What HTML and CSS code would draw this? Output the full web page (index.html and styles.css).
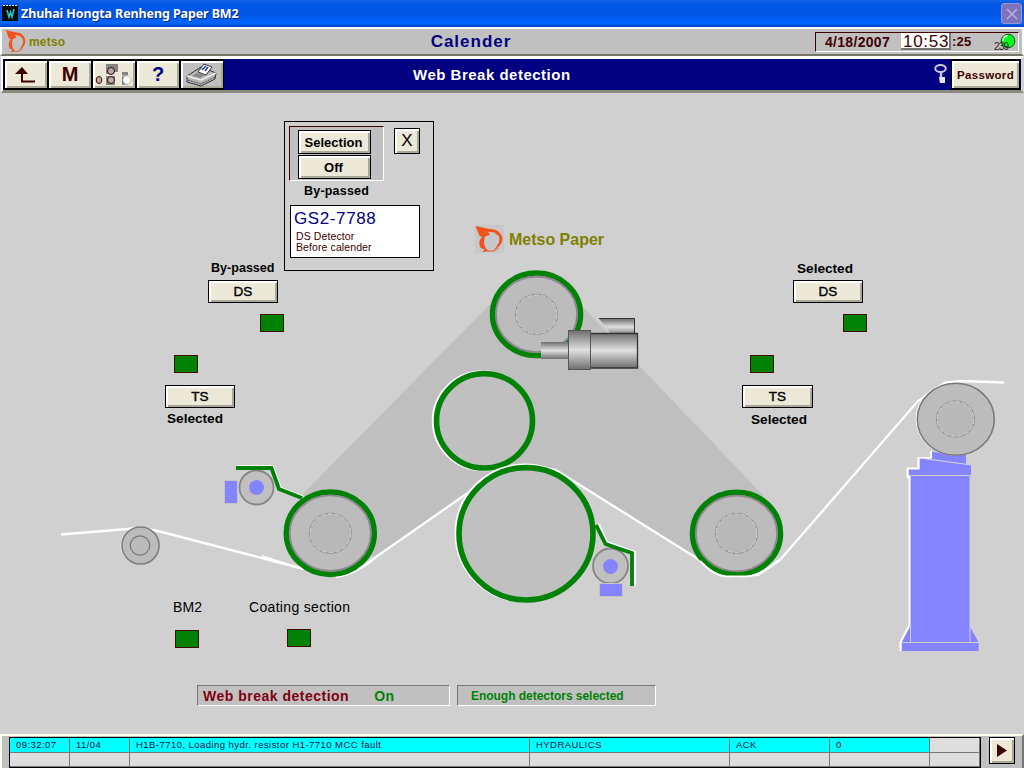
FILE: index.html
```html
<!DOCTYPE html>
<html lang="en">
<head>
<meta charset="utf-8">
<title>Zhuhai Hongta Renheng Paper BM2</title>
<link rel="stylesheet" href="styles.css">
</head>
<body>
<div class="window">
  <header class="titlebar">
    <svg class="app-icon" width="16" height="16" viewBox="0 0 16 16"><rect width="16" height="16" fill="#050c0c"/><path d="M1 .5h14" stroke="#dce6ff" stroke-dasharray="2 1"/><path d="M5 5l2 7 1.500-5 1.500 5 2-8" fill="none" stroke="#24c8c8" stroke-width="1.500"/></svg>
    <h1>Zhuhai Hongta Renheng Paper BM2</h1>
    <button class="win-close" aria-label="Close"><svg width="14" height="14" viewBox="0 0 14 14"><path d="M2 2l10 10M12 2L2 12" stroke="#b9b0d4" stroke-width="1.6"/></svg></button>
  </header>

  <section class="infobar">
    <div class="brand">
      <svg width="20" height="23" viewBox="0 0 28 27" preserveAspectRatio="none"><use href="#metso"/></svg>
      <span>metso</span>
    </div>
    <h2>Calender</h2>
    <div class="clock">
      <span class="date">4/18/2007</span>
      <span class="time">10:53</span>
      <span class="sec">:25</span>
      <svg class="lamp" width="26" height="17" viewBox="0 0 26 17"><circle cx="18" cy="8" r="6.8" fill="#00ff1e" stroke="#064d0a"/><path d="M13 8q0-5 5-5.500" stroke="#e6ffe6" fill="none" stroke-width="1.500"/><text x="4" y="16.500" class="lamp-no" textLength="15">239</text></svg>
    </div>
  </section>

  <nav class="toolbar">
    <button class="tool"><svg width="24" height="18" viewBox="0 0 24 18"><path d="M8 4v11.500h13" fill="none" stroke="#400000" stroke-width="2"/><path d="M1 8L8 1l6 7z" fill="#400000"/></svg></button>
    <button class="tool letter">M</button>
    <button class="tool"><svg width="38" height="24" viewBox="0 0 38 24"><g stroke="#301010"><path d="M11 1h12v8h-4v2h-8z" fill="#858585" stroke="none"/><path d="M11 13h9v9h-9zM27 9h6v13h-6z" fill="#858585" stroke="none"/><ellipse cx="4" cy="17" rx="2.800" ry="3.500" fill="#c9a89b"/><circle cx="16" cy="8" r="3.500" fill="#b9a9a9"/><circle cx="16" cy="17" r="3.500" fill="#c4aaa6"/></g><circle cx="32" cy="17" r="4.200" fill="#fff" stroke="#777" stroke-width=".5"/><path d="M27 13h7M28 22h6" stroke="#ddd"/></svg></button>
    <button class="tool letter help">?</button>
    <button class="tool print"><svg width="34" height="24" viewBox="0 0 34 24"><path d="M2 13L16 4l15 6-1 6-14 7-14-4z" fill="#b7b7b7" stroke="#333"/><path d="M2 13l14 4 15-7" fill="none" stroke="#eee" stroke-width="1.500"/><path d="M3 17l13 4 14-7" fill="none" stroke="#444" stroke-dasharray="2 1"/><path d="M13 9l6-8 8 3-6 8z" fill="#fff" stroke="#334"/><path d="M17 7l4-4M20 8l3-4" stroke="#223a8c" stroke-width="1.500"/><path d="M7 13l8 2 5-3-8-2z" fill="#888"/></svg></button>
    <h3>Web Break detection</h3>
    <svg class="key" width="13" height="21" viewBox="0 0 13 21"><ellipse cx="6.500" cy="4.500" rx="5.300" ry="3.500" fill="none" stroke="#c9c9dd" stroke-width="2"/><path d="M7 8v11" stroke="#c9c9dd" stroke-width="2.400"/><path d="M5 13h6v6H6z" fill="#e4e4e4"/></svg>
    <button class="tool password">Password</button>
  </nav>

  <main class="process">
    <svg class="diagram" width="1024" height="642" viewBox="0 93 1024 642">
      <defs>
        <g id="metso"><path d="M0 0l14 3q8 0 11 5l-1 1q-6-4-13-3 4 1 3 3l-6 2-4-1z" fill="#f4511c"/><path d="M9 9q-6 4-5 9 0 5 5 5l-2 3 6-1-3-3q-3-6 0-13z" fill="#f4511c"/><path d="M20 6q8 2 7 8-1 6-9 10 6-6 6-11 0-4-5-6z" fill="#f4511c"/><path d="M12 25q7 1 11-3" fill="none" stroke="#f4511c"/></g>
        <linearGradient id="steel" x1="0" y1="0" x2="0" y2="1"><stop offset="0" stop-color="#6e6e6e"/><stop offset=".5" stop-color="#e0e0e0"/><stop offset="1" stop-color="#6e6e6e"/></linearGradient>
        <g id="roll"><ellipse rx="44" ry="41.200" fill="#bcbcbc" stroke="#008207" stroke-width="5.500"/><ellipse rx="40.600" ry="37.800" fill="none" stroke="#8d878d" stroke-width="1.800"/><ellipse rx="21" ry="20" fill="#b8b8b8" stroke="#858585"/><ellipse rx="20.500" ry="19.500" fill="none" stroke="#e4e4e4" stroke-width=".7" stroke-dasharray="5 2"/></g>
      </defs>
      <path d="M300 497L495 299l40-20 42 22 186 194-26 80-36-14-145-91-38-6-52 30-90 65z" fill="#bfbfbf"/>
      <g fill="none" stroke="#fff" stroke-width="2.300">
        <path d="M61 534.500l78-6.500 19 3"/>
        <path d="M158 531l146 38" stroke-width="2.500"/>
        <path d="M262 556l48 15" stroke-width="1.500"/>
        <path d="M336 577q20-3 40-20l106-74 24-15 20-3 30 5 158 99 14 6h30l22-15 138-159 27-18.500 16-1.500 43 1.500"/>
      </g>

      <circle cx="139.500" cy="545.500" r="19" fill="#fff"/>
      <circle cx="140.500" cy="545.500" r="18.600" fill="#bcbcbc" stroke="#7b7b7b" stroke-width="1.500"/>
      <circle cx="140" cy="545.500" r="9.700" fill="#bbb" stroke="#777" stroke-width="1.200"/>

      <g>
        <path d="M237 466h36l8 22 23 9" fill="none" stroke="#fff" stroke-width="2"/>
        <circle cx="256.500" cy="487.500" r="17" fill="#c0c0c0" stroke="#858585" stroke-width="1.800"/>
        <circle cx="256.500" cy="487.500" r="7.500" fill="#8484ff"/>
        <rect x="224.500" y="480.500" width="13" height="23" fill="#8484ff" stroke="#c5c5c5"/>
        <path d="M236 468h35.500l7.500 21 23 9" fill="none" stroke="#008207" stroke-width="3.800"/>
      </g>
      <use href="#roll" x="330.300" y="533.200"/>

      <ellipse cx="482.800" cy="420.800" rx="48.500" ry="48" fill="none" stroke="#fff" stroke-width="5"/>
      <ellipse cx="484.500" cy="420.800" rx="48" ry="47.200" fill="#c0c0c0" stroke="#008207" stroke-width="5.600"/>
      <ellipse cx="524.500" cy="533" rx="67.500" ry="67" fill="none" stroke="#fff" stroke-width="5"/>
      <ellipse cx="526" cy="533.800" rx="67" ry="66.200" fill="#c0c0c0" stroke="#008207" stroke-width="5.600"/>

      <circle cx="610.500" cy="566" r="17.500" fill="#c0c0c0" stroke="#858585" stroke-width="1.800"/>
      <circle cx="610.500" cy="566.500" r="7.500" fill="#8484ff"/>
      <rect x="599.500" y="583.500" width="23" height="13" fill="#8484ff" stroke="#c5c5c5"/>
      <path d="M599 524l8 18 28 10v34" fill="none" stroke="#fff" stroke-width="2"/>
      <path d="M596 525l9.500 19 26.500 9v33" fill="none" stroke="#008207" stroke-width="3.800"/>

      <use href="#roll" x="736.500" y="533.400"/>
      <path d="M700 561q14 15 26 15.500h20q16-1 32-16" fill="none" stroke="#fff" stroke-width="2"/>

      <use href="#roll" x="536.500" y="314.300"/>
      <g>
        <path d="M599 318.500h35v17h-22z" fill="url(#steel)"/><path d="M599 318.500h35.500v15" fill="none" stroke="#333"/>
        <rect x="541" y="342" width="28" height="17" fill="url(#steel)"/>
        <rect x="590" y="333" width="48" height="35" fill="url(#steel)"/><path d="M590 333.500h47.500v34.500h-47" fill="none" stroke="#333" stroke-width="1.300"/>
        <rect x="568.500" y="330.500" width="22" height="39" fill="url(#steel)" stroke="#555"/>
      </g>

      <g fill="#8484ff">
        <path d="M932 452l34 3v9l-35-5z"/>
        <path d="M909 476v-7h10.500v-11l51.500 7v10z"/>
        <rect x="910" y="475" width="60" height="168"/>
        <path d="M910 626l-8 16v9h76.500v-9l-9-16v16h-59.500z"/>
        <path d="M931 451v7M909.500 626V477h-2v-8.500h11V458h13M909 626l-8.500 16v9" fill="none" stroke="#fff" stroke-width="2"/>
        <path d="M919 458l52 7M909 475.500h61v167h9M902 642.500h68M910.500 476v166" fill="none" stroke="#cdcdda"/>
      </g>
      <ellipse cx="954.300" cy="419" rx="38.700" ry="36.500" fill="#fff"/>
      <ellipse cx="955.800" cy="419.300" rx="38.500" ry="36" fill="#bcbcbc" stroke="#777" stroke-width="1.500"/>
      <ellipse cx="955.500" cy="419" rx="19" ry="18" fill="#b9b9b9" stroke="#858585"/><ellipse cx="955.500" cy="419" rx="18.500" ry="17.500" fill="none" stroke="#e4e4e4" stroke-width=".7" stroke-dasharray="5 2"/>

      <g fill="#008207" stroke="#400c00">
        <rect x="260.500" y="314.500" width="23" height="17"/><rect x="174.500" y="355.500" width="23" height="17"/>
        <rect x="843.500" y="314.500" width="23" height="17"/><rect x="750.500" y="355.500" width="23" height="17"/>
        <rect x="175.500" y="630.500" width="23" height="17"/><rect x="287.500" y="629.500" width="23" height="17"/>
      </g>
      <rect x="475" y="225" width="29" height="28" fill="#c6c8ca"/>
      <use href="#metso" x="475.500" y="226"/>
      <g class="labels">
        <text x="509" y="245" class="metso-name" textLength="95" lengthAdjust="spacingAndGlyphs">Metso Paper</text>
        <text x="211" y="272" textLength="63.500" lengthAdjust="spacingAndGlyphs">By-passed</text>
        <text x="167" y="423" textLength="56" lengthAdjust="spacingAndGlyphs">Selected</text>
        <text x="797" y="273" textLength="56" lengthAdjust="spacingAndGlyphs">Selected</text>
        <text x="751" y="424" textLength="56" lengthAdjust="spacingAndGlyphs">Selected</text>
        <text x="173" y="612" class="plain" textLength="29">BM2</text>
        <text x="249" y="612" class="plain" textLength="101">Coating section</text>
      </g>
    </svg>
    <button class="btn ds-left">DS</button>
    <button class="btn ts-left">TS</button>
    <button class="btn ds-right">DS</button>
    <button class="btn ts-right">TS</button>

    <section class="popup">
      <div class="popup-top">
        <div class="choice"><button class="btn">Selection</button><button class="btn">Off</button></div>
        <button class="btn popup-close">X</button>
      </div>
      <div class="state">By-passed</div>
      <div class="tag"><div class="tag-id">GS2-7788</div><div class="tag-desc">DS Detector<br>Before calender</div></div>
    </section>

    <div class="status">
      <div class="status-box detection"><span>Web break detection</span><b>On</b></div>
      <div class="status-box enough">Enough detectors selected</div>
    </div>
  </main>

  <footer class="alarms">
    <div class="alarm-grid">
      <div class="cell on">09:32:07</div><div class="cell on">11/04</div><div class="cell on msg">H1B-7710, Loading hydr. resistor H1-7710 MCC fault</div><div class="cell on">HYDRAULICS</div><div class="cell on">ACK</div><div class="cell on">0</div><div class="cell"></div>
      <div class="cell"></div><div class="cell"></div><div class="cell"></div><div class="cell"></div><div class="cell"></div><div class="cell"></div><div class="cell"></div>
    </div>
    <button class="btn next" aria-label="Next"><svg width="10" height="13" viewBox="0 0 10 13"><path d="M0 0l10 6.500L0 13z" fill="#400000"/></svg></button>
  </footer>
</div>
</body>
</html>
```

FILE: styles.css
```css
* { box-sizing: border-box; }
body { margin: 0; background: #d0d0d0; font-family: "Liberation Sans", Arial, sans-serif; overflow: hidden; }
h1, h2, h3 { margin: 0; }
button { font: inherit; padding: 0; margin: 0; border-radius: 0; white-space: nowrap; }
.window { width: 1024px; height: 768px; display: flex; flex-direction: column; overflow: hidden; }

.titlebar { height: 27px; flex: none; display: flex; align-items: center; padding: 0 2px; background: linear-gradient(#1667e8 0, #0058e6 15%, #0055e5 50%, #0066ff 85%, #0040c0 100%); }
.app-icon { margin-top: -1px; }
.titlebar h1 { margin-left: 3px; flex: 1; color: #fff; font: bold 12.5px "Noto Sans", sans-serif; letter-spacing: -.11px; text-shadow: 1px 1px 0 #0a2a80; }
.win-close { width: 21px; height: 21px; background: #7c72bd; border: 1px solid #9a94d5; border-radius: 3px; display: grid; place-items: center; }

.infobar { height: 29px; flex: none; display: grid; grid-template-columns: 300px 1fr 300px; align-items: center; background: #c0c0c0; border: 2px solid #fff; border-bottom-color: #77756a; }
.brand { display: flex; align-items: center; gap: 3px; padding-left: 4px; color: #808000; font-size: 12px; font-weight: bold; letter-spacing: .2px; }
.infobar h2 { color: #000080; font-size: 17px; letter-spacing: 1px; text-align: center; padding-right: 82px; }
.clock { width: 204px; height: 20px; justify-self: end; margin-right: 3px; display: flex; align-items: center; border: 1px solid #400000; border-color: #400000 #fff #fff #400000; color: #400000; font-weight: bold; }
.date { width: 85px; padding-left: 9px; font-size: 14px; letter-spacing: .3px; }
.time { width: 50px; height: 17px; line-height: 17px; padding-left: 2px; background: #fff; border-right: 2px solid #777; border-bottom: 2px solid #777; font-size: 17px; font-weight: normal; letter-spacing: .7px; }
.sec { width: 39px; padding-left: 1px; font-size: 13px; letter-spacing: .2px; }
.lamp-no { font: 10px "Liberation Sans", sans-serif; fill: #302020; }

.toolbar { height: 37px; flex: none; display: flex; align-items: center; padding: 0 1px; margin-left: 1px; background: #000080; border: 3px solid #fff; border-left-width: 2px; border-bottom-color: #8b897e; border-right-color: #d6d3c4; }
.tool { width: 44px; height: 31px; display: grid; place-items: center; background: #ece9d8; border: solid #000; border-width: 2px 1px; color: #400000; box-shadow: inset 2px 2px #fff, inset -2px -2px #aaa899; }
.tool.letter { font-size: 20px; font-weight: bold; }
.tool.help { color: #000080; }
.tool.print { background: #c0c0c0; }
.toolbar h3 { flex: 1; color: #fff; font-size: 15px; letter-spacing: .5px; padding-left: 189px; }
.key { margin-right: 4px; }
.tool.password { width: 69px; font-size: 11.500px; font-weight: bold; letter-spacing: .35px; }

.process { position: relative; height: 642px; flex: none; background: #d0d0d0; }
.diagram { display: block; }
.labels text { font: bold 13px "Liberation Sans", sans-serif; fill: #000; }
.labels .plain { font: 14px "Liberation Sans", sans-serif; }
.labels .metso-name { font-size: 16.500px; fill: #808000; }

.btn { display: grid; place-items: center; background: #ece9d8; border: 1px solid #000; color: #000; font-size: 13px; font-weight: bold; box-shadow: inset 2px 2px #fff, inset -2px -2px #aaa899; }
.process > .btn { position: absolute; width: 70px; height: 23px; font-size: 13.5px; font-weight: normal; -webkit-text-stroke: .4px #000; }
.process > .ds-left { left: 208px; top: 187px; }
.process > .ts-left { left: 165px; top: 292px; }
.process > .ds-right { left: 793px; top: 187px; }
.process > .ts-right { left: 742px; top: 292px; width: 71px; }

.popup { position: absolute; left: 284px; top: 28px; width: 150px; height: 150px; border: 1px solid #000; background: #d0d0d0; padding: 4px; }
.popup-top { display: flex; gap: 10px; }
.choice { width: 95px; height: 55px; padding: 3px 0 0 8px; display: flex; flex-direction: column; gap: 1px; background: #c0c0c0; border: 1px solid; border-color: #400000 #fff #fff #400000; }
.choice .btn { width: 73px; height: 24px; padding-right: 2px; }
.popup-close { width: 26px; height: 26px; margin-top: 2px; font-size: 17px; font-weight: normal; }
.state { height: 24px; padding: 3px 0 0 15px; font-size: 12.500px; font-weight: bold; letter-spacing: .2px; line-height: 14px; }
.tag { width: 130px; height: 53px; margin-left: 1px; padding: 4px 3px; background: #fff; border: 1px solid #000; }
.tag-id { color: #000080; font-size: 17px; line-height: 18px; letter-spacing: .6px; }
.tag-desc { padding: 3px 0 0 2px; color: #400000; font-size: 10.500px; line-height: 11px; letter-spacing: .1px; }

.status { position: absolute; left: 197px; top: 592px; display: flex; gap: 7px; }
.status-box { height: 21px; display: flex; align-items: center; background: #c0c0c0; border: 1px solid; border-color: #777 #fff #fff #777; font-weight: bold; color: #008207; white-space: nowrap; }
.detection { width: 253px; padding-left: 5px; gap: 25px; font-size: 14px; letter-spacing: .5px; }
.detection span { color: #800010; }
.enough { width: 199px; padding-left: 13px; font-size: 12px; letter-spacing: -.03px; }

.alarms { height: 35px; flex: none; display: flex; gap: 8px; padding: 0 7px; margin-top: -1px; position: relative; background: #c0c0c0; border: 2px solid #fffdf0; border-right-color: #777; border-bottom: 0; padding-top: 1px; }
.alarm-grid { width: 972px; height: 31px; display: grid; grid-template: 15px 14px / 60px 60px 400px 200px 100px 100px 50px; border: 1px solid #000; }
.cell { background: #dedede; border-right: 1px solid #777; border-bottom: 1px solid #777; color: #101040; font-size: 9.500px; line-height: 14px; padding-left: 6px; letter-spacing: .45px; white-space: nowrap; overflow: hidden; }
.cell.on { background: #00ffff; }
.next { width: 26px; height: 27px; }
```
